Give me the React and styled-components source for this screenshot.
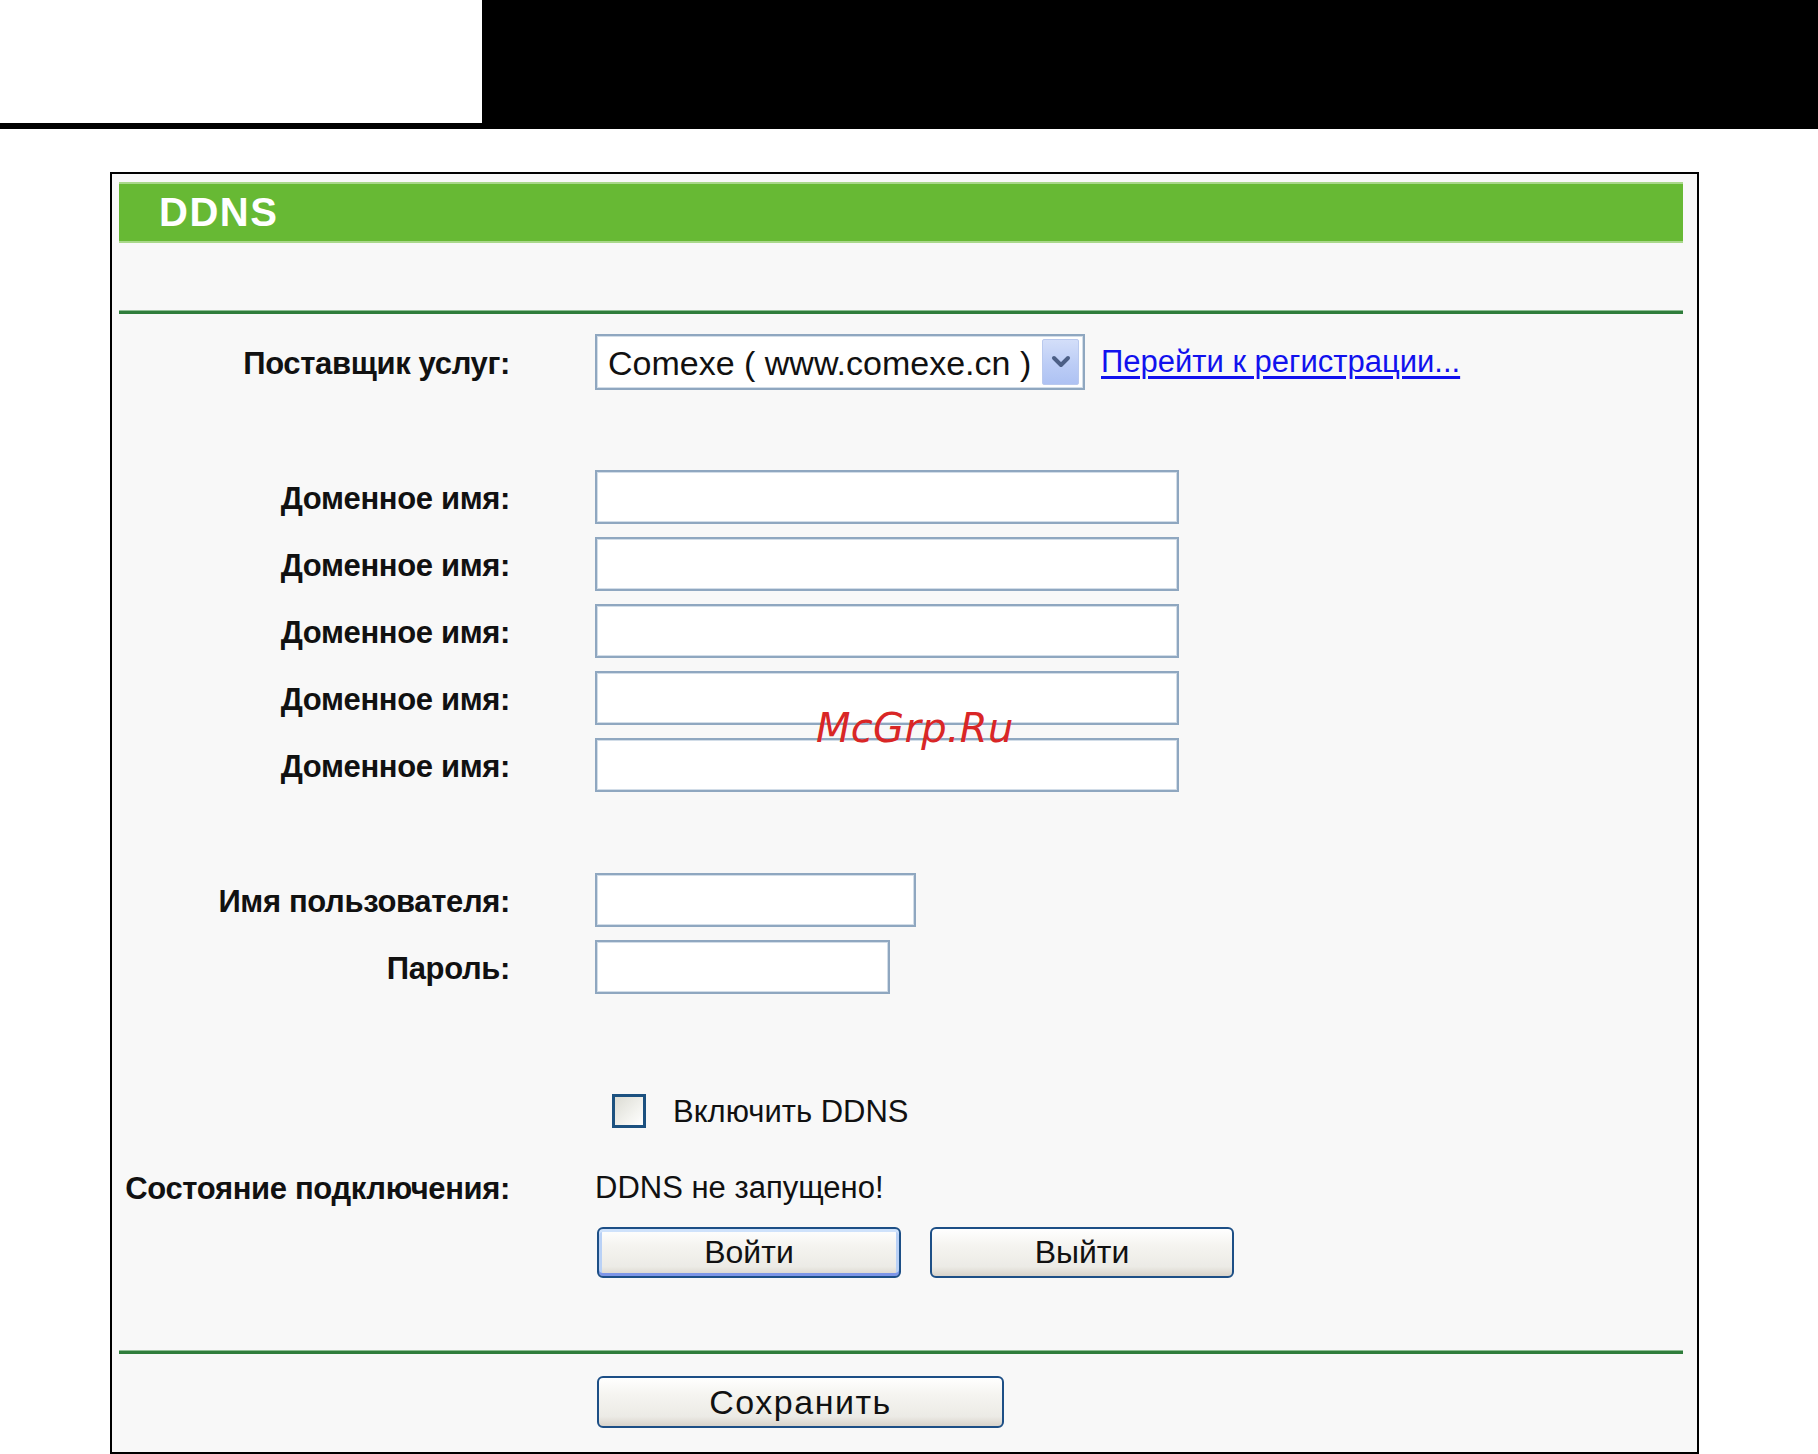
import React from 'react';
import styled, { createGlobalStyle } from 'styled-components';

const Global = createGlobalStyle`
  html, body { margin: 0; padding: 0; background: #fff; }
  body { font-family: "Liberation Sans", Arial, sans-serif; color: #000; }
  * { box-sizing: border-box; }
`;

const Page = styled.div`
  position: relative;
  width: 1818px;
  height: 1454px;
  overflow: hidden;
  background: #fff;
`;

const TopBar = styled.div`
  display: flex;
  align-items: flex-start;
  height: 129px;
  background: #000;
`;

const TopBlank = styled.div`
  width: 482px;
  height: 123px;
  background: #fff;
`;

const Panel = styled.div`
  margin: 43px 0 0 110px;
  width: 1589px;
  border: 2px solid #000;
  background: #f8f8f8;
  padding: 8px 14px 24px 7px;
`;

const Header = styled.div`
  display: flex;
  align-items: center;
  height: 61px;
  padding-left: 40px;
  background: #67b934;
  border-top: 2px solid #a9d88a;
  border-bottom: 2px solid #a9d88a;
  color: #fff;
  font-weight: bold;
  font-size: 40px;
  letter-spacing: 1.5px;
`;

const Divider = styled.div`
  height: 3px;
  margin-top: ${p => p.$mt}px;
  background: #2f7d3c;
  box-shadow: 0 -1px 0 #8fbf95;
`;

const Row = styled.div`
  display: flex;
  align-items: center;
  height: ${p => p.$h}px;
  margin-top: ${p => p.$mt}px;
`;

const Label = styled.div`
  width: 391px;
  flex: none;
  text-align: right;
  font-weight: bold;
  font-size: 31px;
  letter-spacing: -0.35px;
  color: #111;
  white-space: nowrap;
  padding-top: 3px;
`;

const Field = styled.div`
  display: flex;
  align-items: center;
  gap: ${p => p.$gap || 0}px;
  margin-left: ${p => p.$ml ?? 85}px;
  height: 100%;
`;

const SelectBox = styled.div`
  display: flex;
  align-items: center;
  width: 490px;
  height: 56px;
  border: 2px solid #8fa7c0;
  box-shadow: inset 0 0 0 1px #d2dde8;
  background: #fff;
  padding: 0 4px 0 11px;
`;

const SelectText = styled.span`
  flex: 1;
  font-size: 34px;
  color: #111;
  white-space: nowrap;
  padding-top: 2px;
`;

const SelectArrow = styled.span`
  display: flex;
  align-items: center;
  justify-content: center;
  width: 37px;
  height: 46px;
  border: 1px solid #b9c9ee;
  border-radius: 2px;
  background: linear-gradient(180deg, #d3def9 0%, #bccdf6 55%, #aec2f3 100%);
`;

const RegLink = styled.a`
  font-size: 31px;
  color: #1111ee;
  text-decoration: underline;
  text-underline-offset: 4px;
  white-space: nowrap;
  cursor: pointer;
  margin-left: -3px;
`;

const TextInput = styled.input`
  width: ${p => p.$w}px;
  height: 54px;
  border: 2px solid #8fa7c0;
  box-shadow: inset 0 0 0 1px #d2dde8;
  background: #fff;
  outline: none;
  font-size: 30px;
  padding: 0 8px;
`;

const CheckBox = styled.span`
  display: inline-block;
  width: 34px;
  height: 34px;
  margin-left: 17px;
  border: 3px solid #1c5180;
  background: linear-gradient(135deg, #dcdcd4 0%, #f2f2ee 60%, #ffffff 100%);
`;

const PlainText = styled.span`
  font-size: 31px;
  color: #111;
  white-space: nowrap;
  padding-top: 2px;
`;

const Button = styled.button`
  width: ${p => p.$w}px;
  height: ${p => p.$h}px;
  border: 2px solid #1d4f86;
  border-radius: 6px;
  background: linear-gradient(180deg, #ffffff 0%, #f5f4f0 35%, #ecebe6 80%, #d8d3ca 100%);
  font-family: "Liberation Sans", Arial, sans-serif;
  font-size: ${p => p.$fs || 32}px;
  letter-spacing: ${p => p.$ls || 0}px;
  color: #111;
  padding: 0;
  margin-left: 2px;
  box-shadow: ${p => (p.$focus
    ? 'inset 0 3px 0 #cfe2fb, inset 0 -3px 0 #7d96e8, inset 3px 0 0 #b9d1f6, inset -3px 0 0 #b9d1f6'
    : 'none')};
`;

const Watermark = styled.div`
  position: absolute;
  left: 816px;
  top: 708px;
  font-family: "DejaVu Sans", sans-serif;
  font-style: oblique;
  font-size: 40px;
  line-height: 40px;
  letter-spacing: 0.3px;
  color: #d92626;
  pointer-events: none;
`;

function Chevron() {
  return (
    <svg width="20" height="14" viewBox="0 0 20 14">
      <path d="M3 3 L10 10 L17 3" fill="none" stroke="#4c5f86" strokeWidth="4" strokeLinecap="round" strokeLinejoin="round" />
    </svg>
  );
}

export default function App() {
  const domains = [0, 1, 2, 3, 4];
  return (
    <Page>
      <Global />
      <TopBar>
        <TopBlank />
      </TopBar>
      <Panel>
        <Header>DDNS</Header>
        <Divider $mt={68} />

        <Row $h={56} $mt={20}>
          <Label>Поставщик услуг:</Label>
          <Field $gap={19}>
            <SelectBox>
              <SelectText>Comexe ( www.comexe.cn )</SelectText>
              <SelectArrow><Chevron /></SelectArrow>
            </SelectBox>
            <RegLink>Перейти к регистрации...</RegLink>
          </Field>
        </Row>

        {domains.map(i => (
          <Row key={i} $h={54} $mt={i === 0 ? 80 : 13}>
            <Label>Доменное имя:</Label>
            <Field>
              <TextInput $w={584} />
            </Field>
          </Row>
        ))}

        <Row $h={54} $mt={81}>
          <Label>Имя пользователя:</Label>
          <Field>
            <TextInput $w={321} />
          </Field>
        </Row>
        <Row $h={54} $mt={13}>
          <Label>Пароль:</Label>
          <Field>
            <TextInput $w={295} type="password" />
          </Field>
        </Row>

        <Row $h={34} $mt={100}>
          <Label />
          <Field $gap={27}>
            <CheckBox />
            <PlainText>Включить DDNS</PlainText>
          </Field>
        </Row>

        <Row $h={34} $mt={42}>
          <Label>Состояние подключения:</Label>
          <Field>
            <PlainText>DDNS не запущено!</PlainText>
          </Field>
        </Row>

        <Row $h={51} $mt={23}>
          <Label />
          <Field $gap={27}>
            <Button $w={304} $h={51} $focus>Войти</Button>
            <Button $w={304} $h={51}>Выйти</Button>
          </Field>
        </Row>

        <Divider $mt={73} />

        <Row $h={52} $mt={22}>
          <Label />
          <Field>
            <Button $w={407} $h={52} $fs={34} $ls={1.5}>Сохранить</Button>
          </Field>
        </Row>
      </Panel>
      <Watermark>McGrp.Ru</Watermark>
    </Page>
  );
}
